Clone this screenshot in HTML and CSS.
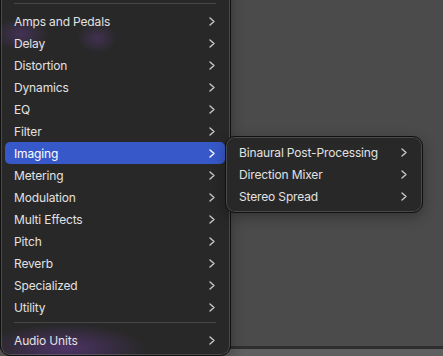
FILE: index.html
```html
<!DOCTYPE html>
<html lang="en">

<head>
    <meta charset="UTF-8">
    <meta name="viewport" content="width=device-width, initial-scale=1.0">
    <title>Plug-in Menu</title>
    <link rel="stylesheet" href="styles.css">
</head>

<body>
    <div class="screen">
        <div class="workspace"></div>
        <div class="status-strip"></div>

        <!-- Main plug-in menu -->
        <div class="menu main-menu">
            <div class="separator top-sep"></div>
            <div class="menu-item"><span>Amps and Pedals</span><svg class="chevron" viewBox="0 0 6 9"><path d="M1 1 L5 4.5 L1 8"/></svg></div>
            <div class="menu-item"><span>Delay</span><svg class="chevron" viewBox="0 0 6 9"><path d="M1 1 L5 4.5 L1 8"/></svg></div>
            <div class="menu-item"><span>Distortion</span><svg class="chevron" viewBox="0 0 6 9"><path d="M1 1 L5 4.5 L1 8"/></svg></div>
            <div class="menu-item"><span>Dynamics</span><svg class="chevron" viewBox="0 0 6 9"><path d="M1 1 L5 4.5 L1 8"/></svg></div>
            <div class="menu-item"><span>EQ</span><svg class="chevron" viewBox="0 0 6 9"><path d="M1 1 L5 4.5 L1 8"/></svg></div>
            <div class="menu-item"><span>Filter</span><svg class="chevron" viewBox="0 0 6 9"><path d="M1 1 L5 4.5 L1 8"/></svg></div>
            <div class="menu-item active"><span>Imaging</span><svg class="chevron" viewBox="0 0 6 9"><path d="M1 1 L5 4.5 L1 8"/></svg></div>
            <div class="menu-item"><span>Metering</span><svg class="chevron" viewBox="0 0 6 9"><path d="M1 1 L5 4.5 L1 8"/></svg></div>
            <div class="menu-item"><span>Modulation</span><svg class="chevron" viewBox="0 0 6 9"><path d="M1 1 L5 4.5 L1 8"/></svg></div>
            <div class="menu-item"><span>Multi Effects</span><svg class="chevron" viewBox="0 0 6 9"><path d="M1 1 L5 4.5 L1 8"/></svg></div>
            <div class="menu-item"><span>Pitch</span><svg class="chevron" viewBox="0 0 6 9"><path d="M1 1 L5 4.5 L1 8"/></svg></div>
            <div class="menu-item"><span>Reverb</span><svg class="chevron" viewBox="0 0 6 9"><path d="M1 1 L5 4.5 L1 8"/></svg></div>
            <div class="menu-item"><span>Specialized</span><svg class="chevron" viewBox="0 0 6 9"><path d="M1 1 L5 4.5 L1 8"/></svg></div>
            <div class="menu-item"><span>Utility</span><svg class="chevron" viewBox="0 0 6 9"><path d="M1 1 L5 4.5 L1 8"/></svg></div>
            <div class="separator bottom-sep"></div>
            <div class="menu-item"><span>Audio Units</span><svg class="chevron" viewBox="0 0 6 9"><path d="M1 1 L5 4.5 L1 8"/></svg></div>
        </div>

        <!-- Imaging submenu -->
        <div class="menu sub-menu">
            <div class="menu-item"><span>Binaural Post-Processing</span><svg class="chevron" viewBox="0 0 6 9"><path d="M1 1 L5 4.5 L1 8"/></svg></div>
            <div class="menu-item"><span>Direction Mixer</span><svg class="chevron" viewBox="0 0 6 9"><path d="M1 1 L5 4.5 L1 8"/></svg></div>
            <div class="menu-item"><span>Stereo Spread</span><svg class="chevron" viewBox="0 0 6 9"><path d="M1 1 L5 4.5 L1 8"/></svg></div>
        </div>
    </div>
</body>

</html>
```

FILE: styles.css
```css
body {
    margin: 0;
    padding: 0;
    background-color: #4b4b4b;
    font-family: Inter, "Noto Sans", sans-serif;
    font-size: 12px;
    letter-spacing: -0.15px;
    color: #e2e2e2;
    overflow: hidden;
}

.screen {
    position: relative;
    width: 443px;
    height: 356px;
    display: flex;
    flex-direction: column;
}

.workspace {
    flex: 1;
    background-color: #4b4b4b;
}

.status-strip {
    height: 7px;
    border-top: 3px solid #2e2e2e;
    background-color: #5f5f5f;
}

.menu {
    position: absolute;
    box-sizing: border-box;
    border: 1px solid #111;
    border-radius: 10px;
    box-shadow: inset 0 0 0 1px rgba(255, 255, 255, 0.16), 0 4px 14px rgba(0, 0, 0, 0.3);
    background-color: #282828;
}

.main-menu {
    left: 0;
    top: -21px;
    width: 231px;
    padding: 0 5px 4px 4px;
    background:
        radial-gradient(ellipse 28px 16px at 20px 54px, rgba(95, 60, 130, 0.5), transparent),
        radial-gradient(ellipse 20px 15px at 96px 58px, rgba(95, 60, 130, 0.45), transparent),
        radial-gradient(ellipse 80px 24px at 64px 368px, rgba(90, 55, 125, 0.75), transparent),
        #282828;
}

.sub-menu {
    left: 225px;
    top: 136px;
    width: 198px;
    padding: 4px 5px 5px 5px;
}

.separator {
    height: 1px;
    background-color: #474747;
    margin: 0 9px;
}

.top-sep {
    margin-top: 23px;
    margin-bottom: 6px;
}

.bottom-sep {
    margin-top: 4px;
    margin-bottom: 6px;
}

.menu-item {
    display: flex;
    align-items: center;
    justify-content: space-between;
    height: 22px;
    padding: 0 10px 0 9px;
    border-radius: 5px;
    white-space: nowrap;
}

.sub-menu .menu-item {
    padding: 0 10px 0 8px;
}

.menu-item.active {
    background-color: #3758c9;
    color: #fff;
}

.chevron {
    width: 6px;
    height: 9px;
    fill: none;
    stroke: #c8c8c8;
    stroke-width: 1.4;
    stroke-linecap: round;
    stroke-linejoin: round;
}

.menu-item.active .chevron {
    stroke: #fff;
}
```
